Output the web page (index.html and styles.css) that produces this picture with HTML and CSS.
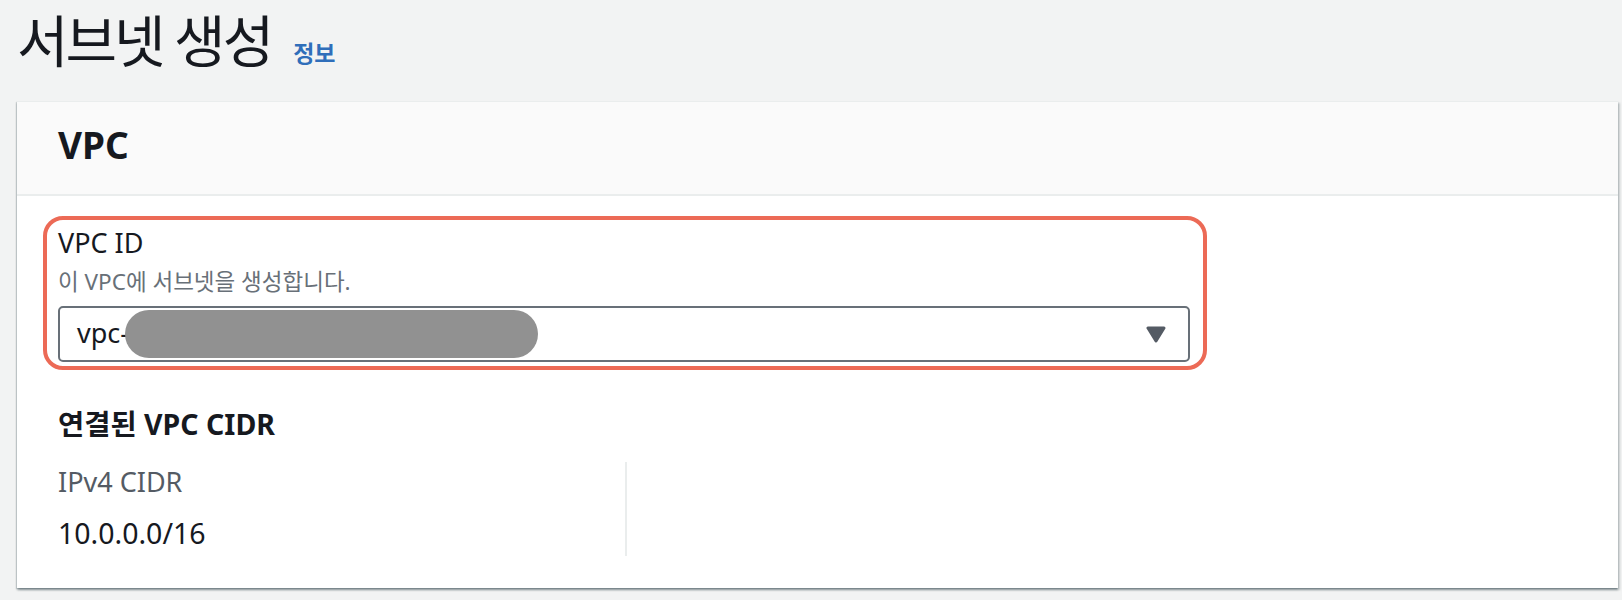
FILE: index.html
```html
<!DOCTYPE html>
<html lang="ko">
<head>
<meta charset="utf-8">
<title>서브넷 생성</title>
<link rel="stylesheet" href="styles.css">
</head>
<body>
<div class="page">
  <div class="title-row">
    <h1 class="title">서브넷 생성</h1>
    <a class="info-link" href="#">정보</a>
  </div>
  <section class="card">
    <div class="card-header">
      <h2 class="card-title">VPC</h2>
    </div>
    <div class="card-body">
      <div class="highlight">
        <div class="field-label">VPC ID</div>
        <div class="field-desc">이 VPC에 서브넷을 생성합니다.</div>
        <div class="select">
          <span class="select-value">vpc-</span>
          <span class="redact"></span>
          <svg class="caret" width="20" height="17" viewBox="0 0 20 17">
            <polygon points="2,2 18,2 10,15" fill="#545b64" stroke="#545b64" stroke-width="3" stroke-linejoin="round"/>
          </svg>
        </div>
      </div>
      <h3 class="section-title">연결된 VPC CIDR</h3>
      <div class="columns">
        <div class="col">
          <div class="key">IPv4 CIDR</div>
          <div class="value">10.0.0.0/16</div>
        </div>
      </div>
    </div>
  </section>
</div>
</body>
</html>
```

FILE: styles.css
```css
html, body {
  margin: 0;
  padding: 0;
}
body {
  background: #f2f3f3;
  font-family: "Noto Sans", "Noto Sans CJK KR", sans-serif;
  color: #16191f;
  width: 1622px;
  height: 600px;
  overflow: hidden;
}
.page {
  padding: 0 4px 0 17px;
}
.title-row {
  height: 76px;
  display: flex;
  align-items: baseline;
}
.title {
  margin: 0;
  font-size: 56px;
  line-height: 80px;
  font-weight: 400;
  letter-spacing: -3px;
  color: #16191f;
}
.info-link {
  margin-left: 22px;
  font-size: 23px;
  font-weight: 700;
  color: #2f6eba;
  text-decoration: none;
}
.card {
  margin-top: 25px;
  background: #ffffff;
  box-shadow: 0 2px 2px 0 rgba(0, 28, 36, 0.35), 2px 2px 2px 0 rgba(0, 28, 36, 0.15), -1px 1px 1px 0 rgba(0, 28, 36, 0.12);
  border-top: 1px solid #eaeded;
}
.card-header {
  background: #fafafa;
  border-bottom: 2px solid #eaeded;
  padding: 20px 41px 26px;
}
.card-title {
  margin: 0;
  font-size: 37px;
  line-height: 46px;
  font-weight: 700;
}
.card-body {
  padding: 20px 41px 32px;
}
.highlight {
  box-sizing: border-box;
  width: 1164px;
  margin-left: -15px;
  border: 4px solid #ec6a56;
  border-radius: 20px;
  padding: 6px 13px 4px 11px;
}
.field-label {
  font-size: 27px;
  line-height: 34px;
}
.field-desc {
  margin-top: 6px;
  font-size: 22.5px;
  line-height: 32px;
  color: #687078;
}
.select {
  position: relative;
  margin-top: 8px;
  height: 56px;
  box-sizing: border-box;
  border: 2px solid #687078;
  border-radius: 5px;
  display: flex;
  align-items: center;
  padding: 0 22px 2px 17px;
}
.select-value {
  font-size: 27px;
  line-height: 36px;
  flex: 1;
}
.redact {
  position: absolute;
  left: 65px;
  top: 2px;
  width: 413px;
  height: 48px;
  border-radius: 24px;
  background: #919191;
}
.caret {
  display: block;
  margin-top: 2px;
}
.section-title {
  margin: 36px 0 0;
  font-size: 28.5px;
  line-height: 36px;
  font-weight: 700;
}
.columns {
  margin-top: 20px;
  display: flex;
}
.col {
  width: 567px;
  border-right: 2px solid #eaeded;
  padding: 2px 0 5px;
}
.key {
  font-size: 27px;
  line-height: 36px;
  color: #545b64;
}
.value {
  margin-top: 15px;
  font-size: 28.5px;
  line-height: 36px;
}
```
